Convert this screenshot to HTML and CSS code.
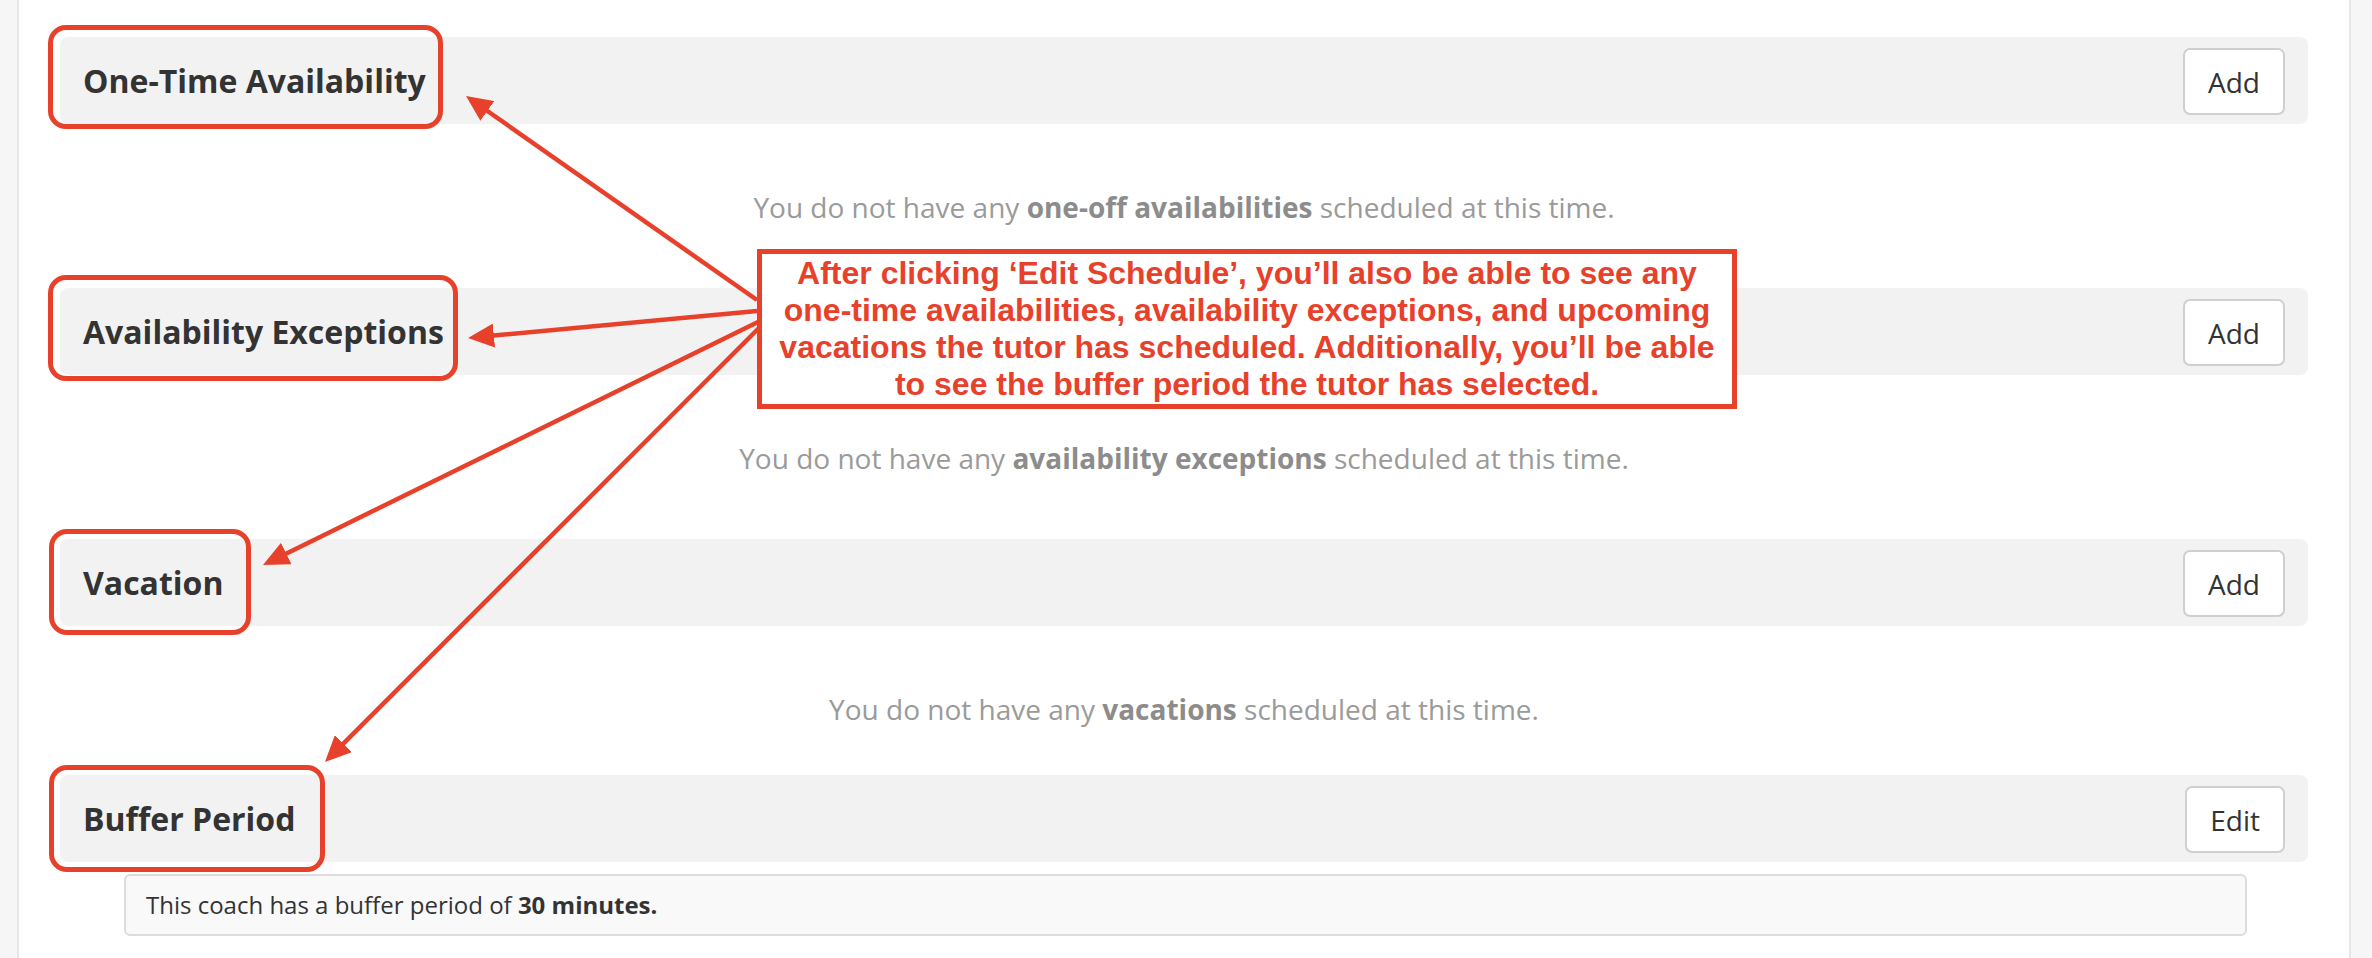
FILE: index.html
```html
<!DOCTYPE html>
<html lang="en">
<head>
<meta charset="utf-8">
<title>Schedule</title>
<link rel="stylesheet" href="styles.css">
</head>
<body>
<div class="page">
  <div class="card">
    <section class="block">
      <div class="bar">
        <h3 class="title hl-1">One-Time Availability</h3>
        <button class="btn">Add</button>
      </div>
      <p class="empty">You do not have any <b>one-off availabilities</b> scheduled at this time.</p>
    </section>
    <section class="block">
      <div class="bar">
        <h3 class="title hl-2">Availability Exceptions</h3>
        <button class="btn">Add</button>
      </div>
      <p class="empty">You do not have any <b>availability exceptions</b> scheduled at this time.</p>
    </section>
    <section class="block">
      <div class="bar">
        <h3 class="title hl-3">Vacation</h3>
        <button class="btn">Add</button>
      </div>
      <p class="empty empty-last">You do not have any <b>vacations</b> scheduled at this time.</p>
    </section>
    <section class="block">
      <div class="bar">
        <h3 class="title hl-4">Buffer Period</h3>
        <button class="btn">Edit</button>
      </div>
      <div class="info">This coach has a buffer period of <b>30 minutes.</b></div>
    </section>
  </div>

  <svg class="arrows" width="2372" height="958" viewBox="0 0 2372 958" xmlns="http://www.w3.org/2000/svg">
    <defs>
      <marker id="head" markerUnits="userSpaceOnUse" markerWidth="27" markerHeight="24" viewBox="0 0 27 24" refX="6" refY="12" orient="auto">
        <path d="M0,0 L26,12 L0,24 Z" fill="#e8412b"/>
      </marker>
    </defs>
    <g stroke="#e8412b" stroke-width="4.5" fill="none" marker-end="url(#head)">
      <line x1="757" y1="300" x2="482.4" y2="107.5"/>
      <line x1="757" y1="311" x2="487.9" y2="336.1"/>
      <line x1="758" y1="322" x2="280.9" y2="556.2"/>
      <line x1="760" y1="327" x2="339.1" y2="747.9"/>
    </g>
  </svg>

  <div class="callout"><p class="callout-text">After clicking ‘Edit Schedule’, you’ll also be able to see any<br>one-time availabilities, availability exceptions, and upcoming<br>vacations the tutor has scheduled. Additionally, you’ll be able<br>to see the buffer period the tutor has selected.</p></div>
</div>
</body>
</html>
```

FILE: styles.css
```css
html, body {
  margin: 0;
  padding: 0;
}

body {
  background: #f6f6f6;
  font-family: "Open Sans", "Noto Sans", "Liberation Sans", sans-serif;
  color: #333;
  width: 2372px;
  height: 958px;
  overflow: hidden;
}

.page {
  position: relative;
  width: 2372px;
  height: 958px;
  padding-left: 17px;
  box-sizing: border-box;
}

.card {
  width: 2334px;
  height: 958px;
  box-sizing: border-box;
  background: #fff;
  border-left: 2px solid #e6e6e6;
  border-right: 2px solid #e6e6e6;
  padding: 37px 41px 0;
}

.bar {
  height: 87px;
  background: #f2f2f2;
  border-radius: 8px;
  display: flex;
  justify-content: space-between;
  align-items: stretch;
  padding: 0 23px;
}

.title {
  position: relative;
  margin: 0;
  display: flex;
  align-items: center;
  font-size: 32px;
  font-weight: 700;
  color: #333;
  line-height: 1;
}

.title::after {
  content: "";
  position: absolute;
  border: 5px solid #e8412b;
  border-radius: 18px;
  pointer-events: none;
}

.hl-1::after { left: -35px; right: -17px; top: -12px; bottom: -5px; }
.hl-2::after { left: -35px; right: -14px; top: -13px; bottom: -6px; }
.hl-3::after { left: -34px; right: -28px; top: -10px; bottom: -9px; }
.hl-4::after { left: -34px; right: -30px; top: -10px; bottom: -10px; }

.btn {
  align-self: center;
  margin-top: 2px;
  height: 67px;
  padding: 0 23px;
  background: #fff;
  border: 2px solid #cfcfcf;
  border-radius: 7px;
  font-family: "Open Sans", "Noto Sans", sans-serif;
  font-size: 28px;
  color: #333;
}

.empty {
  margin: 63px 0 61px;
  text-align: center;
  font-size: 28px;
  line-height: 40px;
  color: #9a9a9a;
}

.empty b {
  font-weight: 700;
  color: #8c8c8c;
}

.empty-last {
  margin-bottom: 46px;
}

.info {
  margin: 12px 61px 0 64px;
  height: 62px;
  box-sizing: border-box;
  background: #f9f9f9;
  border: 2px solid #dcdcdc;
  border-radius: 6px;
  padding: 0 20px;
  font-size: 24px;
  line-height: 58px;
  color: #333;
}

.info b {
  font-weight: 700;
}

.arrows {
  position: absolute;
  left: 0;
  top: 0;
  pointer-events: none;
}

.callout {
  position: absolute;
  left: 757px;
  top: 249px;
  width: 980px;
  height: 160px;
  box-sizing: border-box;
  border: 5px solid #e8412b;
  background: #fff;
  display: flex;
  align-items: center;
  justify-content: center;
}

.callout-text {
  margin: 0;
  text-align: center;
  white-space: nowrap;
  font-family: "Liberation Sans", Arial, sans-serif;
  font-weight: 700;
  font-size: 32px;
  line-height: 37px;
  color: #e8412b;
}
```
